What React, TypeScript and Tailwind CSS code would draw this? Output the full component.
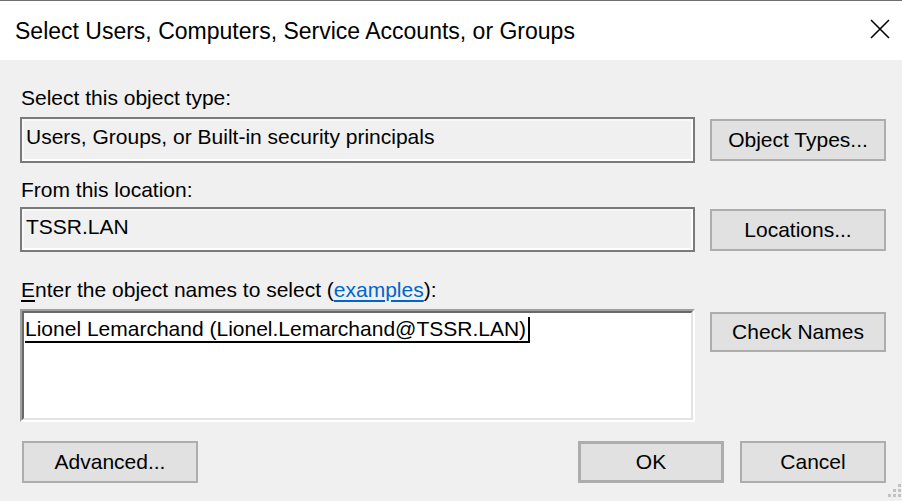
import type { ReactNode } from "react";

// Windows-style "Select Users, Computers, Service Accounts, or Groups" dialog

function Button({ children, className = "" }: { children: ReactNode; className?: string }) {
  return (
    <button
      className={
        "flex items-center justify-center bg-[#e1e1e1] border-2 border-[#adadad] text-[21px] leading-[24px] text-black " +
        className
      }
    >
      {children}
    </button>
  );
}

function ReadOnlyBox({ value, className = "" }: { value: string; className?: string }) {
  return (
    <div className={"w-[675px] border-2 border-[#7a7a7a] " + className}>
      <div className="h-full border-2 border-t-[#f7f7f7] border-l-[#f7f7f7] border-r-white border-b-white bg-[#f0f0f0] flex items-center pl-[2px] pb-[6px]">
        <span className="text-[21px] leading-[24px]">{value}</span>
      </div>
    </div>
  );
}

export default function App() {
  return (
    <div className="relative w-[902px] h-[501px] overflow-hidden bg-[#f0f0f0] text-black font-['Liberation_Sans',Arial,sans-serif]">
      <div className="h-px bg-[#6e6e6e]" />

      {/* title bar */}
      <div className="h-[59px] bg-white flex items-center justify-between pl-[15px] pr-[12px]">
        <span className="text-[23px] leading-[28px]">
          Select Users, Computers, Service Accounts, or Groups
        </span>
        <svg width="20" height="20" viewBox="0 0 20 20" className="mb-[4px]">
          <path d="M1 1 L19 19 M19 1 L1 19" stroke="#000" strokeWidth="1.6" />
        </svg>
      </div>

      <div className="pl-[20px] pr-[16px] pt-[26px]">
        <div className="text-[21px] leading-[24px] ml-[1px]">Select this object type:</div>
        <div className="flex items-center gap-[15px] mt-[7px]">
          <ReadOnlyBox value="Users, Groups, or Built-in security principals" className="h-[46px]" />
          <Button className="w-[176px] h-[42px]">Object Types...</Button>
        </div>

        <div className="text-[21px] leading-[24px] ml-[1px] mt-[15px]">From this location:</div>
        <div className="flex items-center gap-[15px] mt-[5px]">
          <ReadOnlyBox value="TSSR.LAN" className="h-[45px]" />
          <Button className="w-[176px] h-[42px]">Locations...</Button>
        </div>

        <div className="text-[21px] leading-[24px] ml-[1px] mt-[26px]">
          <span className="underline underline-offset-[3px]">E</span>nter the object names to select (
          <span className="text-[#0066cc] underline underline-offset-[3px]">examples</span>):
        </div>
        <div className="flex items-start gap-[15px] mt-[7px]">
          <div className="w-[675px] h-[113px] border-2 border-t-[#a0a0a0] border-l-[#a0a0a0] border-r-white border-b-white">
            <div className="h-full bg-white border-2 border-t-[#696969] border-l-[#696969] border-r-[#e3e3e3] border-b-[#e3e3e3] pl-[1px] pt-[4px]">
              <span className="inline-block text-[21px] leading-[24px] border-b-2 border-r-2 border-black pr-[2px]">
                Lionel Lemarchand (Lionel.Lemarchand@TSSR.LAN)
              </span>
            </div>
          </div>
          <Button className="w-[176px] h-[40px] mt-[3px]">Check Names</Button>
        </div>

        <div className="flex items-center mt-[19px]">
          <Button className="w-[176px] h-[42px] ml-[2px]">Advanced...</Button>
          <div className="flex-1" />
          <Button className="w-[146px] h-[42px] border-[3px] border-[#0078d7]">OK</Button>
          <Button className="w-[146px] h-[42px] ml-[16px]">Cancel</Button>
        </div>
      </div>

      {/* size grip */}
      <svg width="13" height="13" viewBox="0 0 13 13" className="absolute right-[1px] bottom-[4px]">
        <g fill="#c2c2c2">
          <rect x="10" y="0" width="3" height="3" />
          <rect x="5" y="5" width="3" height="3" />
          <rect x="10" y="5" width="3" height="3" />
          <rect x="0" y="10" width="3" height="3" />
          <rect x="5" y="10" width="3" height="3" />
          <rect x="10" y="10" width="3" height="3" />
        </g>
      </svg>
    </div>
  );
}
